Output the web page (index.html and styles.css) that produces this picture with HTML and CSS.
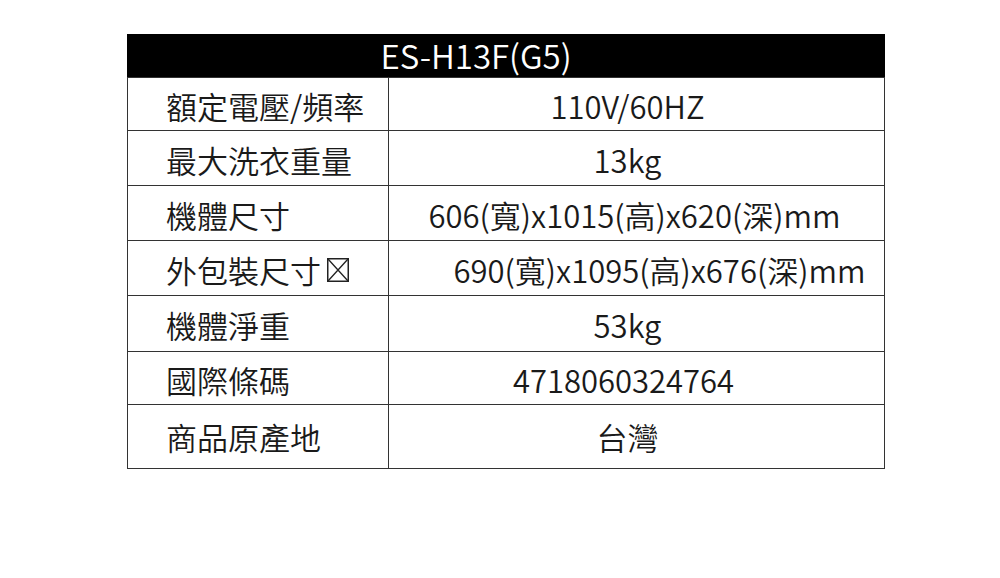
FILE: index.html
```html
<!DOCTYPE html>
<html lang="zh-Hant">
<head>
<meta charset="utf-8">
<link rel="stylesheet" href="styles.css">
</head>
<body>
<div class="page">
  <div class="spec">
    <div class="spec-head">ES-H13F(G5)</div>
    <div class="spec-row row-a">
      <div class="spec-label">額定電壓/頻率</div>
      <div class="spec-value">110V/60HZ</div>
    </div>
    <div class="spec-row">
      <div class="spec-label">最大洗衣重量</div>
      <div class="spec-value">13kg</div>
    </div>
    <div class="spec-row">
      <div class="spec-label">機體尺寸</div>
      <div class="spec-value shift-s">606(寬)x1015(高)x620(深)mm</div>
    </div>
    <div class="spec-row">
      <div class="spec-label">外包裝尺寸<svg class="tofu" viewBox="0 0 22 24" width="22" height="24"><rect x="0.75" y="0.75" width="20.5" height="22.5" fill="none" stroke="#222" stroke-width="1.5"/><path d="M1 1 L21 23 M21 1 L1 23" stroke="#222" stroke-width="1.3" fill="none"/></svg></div>
      <div class="spec-value shift-l">690(寬)x1095(高)x676(深)mm</div>
    </div>
    <div class="spec-row row-b">
      <div class="spec-label">機體淨重</div>
      <div class="spec-value">53kg</div>
    </div>
    <div class="spec-row row-a">
      <div class="spec-label">國際條碼</div>
      <div class="spec-value shift-n">4718060324764</div>
    </div>
    <div class="spec-row row-last">
      <div class="spec-label">商品原產地</div>
      <div class="spec-value">台灣</div>
    </div>
  </div>
</div>
</body>
</html>
```
FILE: styles.css
```css
* { box-sizing: border-box; }
html, body { margin: 0; padding: 0; background: #fff; }
body {
  font-family: "Noto Sans CJK TC", "Noto Sans", sans-serif;
  font-weight: 350;
  color: #1a1a1a;
}
.page {
  width: 1000px;
  height: 578px;
  padding: 34px 0 0 127px;
}
.spec {
  width: 758px;
  border: 1px solid #333;
  border-top: none;
}
.spec-head {
  height: 43px;
  background: #000;
  color: #fff;
  font-size: 33px;
  line-height: 43px;
  text-align: center;
  padding-right: 60px;
  margin: 0 -1px;
}
.spec-row {
  display: grid;
  grid-template-columns: 261px 1fr;
  height: 55px;
  border-top: 1px solid #333;
  font-size: 31px;
}
.spec-row.row-a { height: 53px; }
.spec-row.row-b { height: 56px; }
.spec-row.row-last { height: 64px; }
.spec-label {
  border-right: 1px solid #333;
  padding-left: 38px;
  display: flex;
  align-items: center;
  padding-top: 2px;
  white-space: nowrap;
}
.spec-row.row-last .spec-label,
.spec-row.row-last .spec-value { padding-top: 0; }
.tofu { margin-left: 6px; margin-top: 2px; }
.spec-value {
  display: flex;
  align-items: center;
  justify-content: center;
  padding-top: 2px;
  padding-right: 18px;
  white-space: nowrap;
}
.spec-value.shift-s { padding-right: 4px; }
.spec-value.shift-l { padding-right: 0; padding-left: 46px; }
.spec-value.shift-n { padding-right: 26px; }
```
